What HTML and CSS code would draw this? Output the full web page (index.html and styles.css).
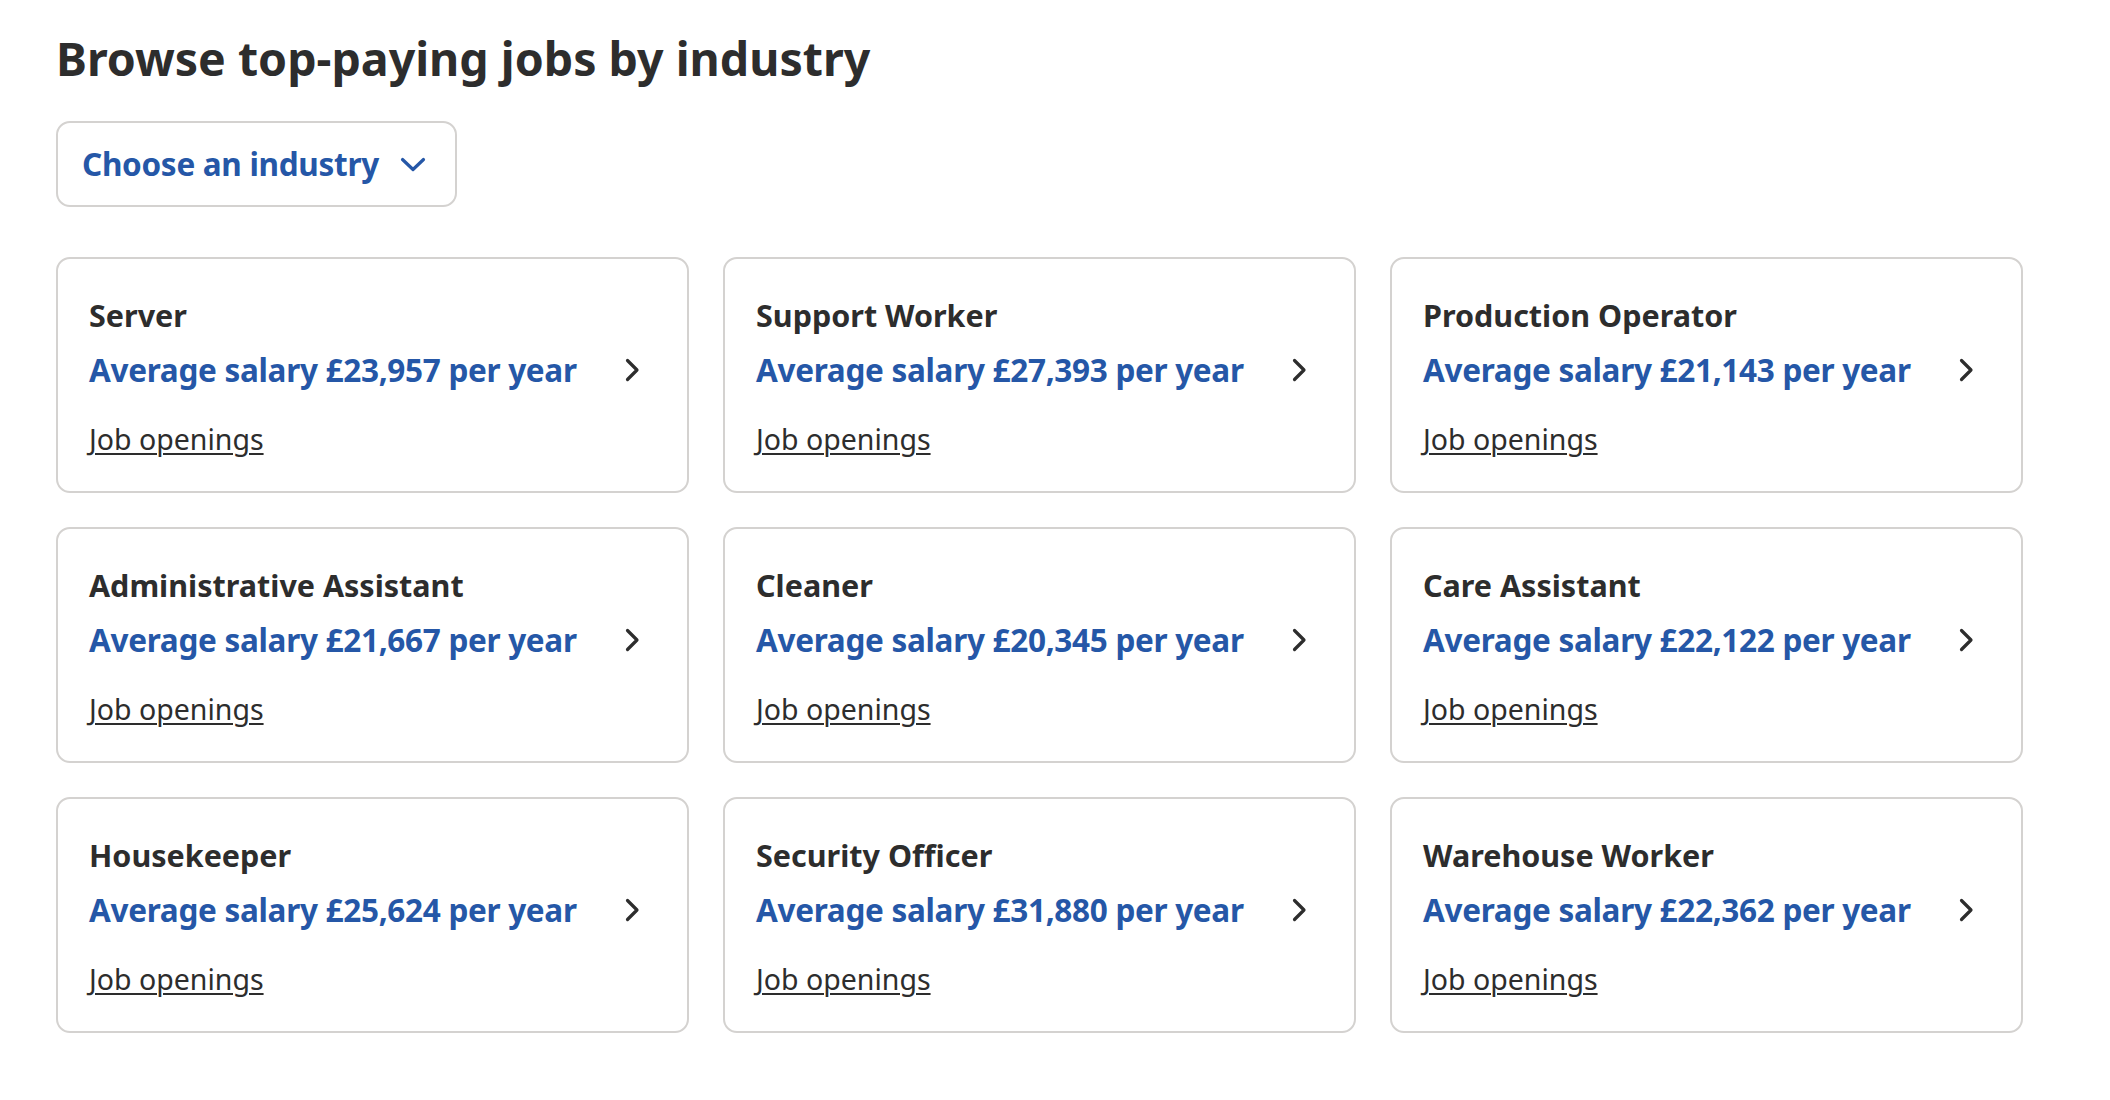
FILE: index.html
```html
<!DOCTYPE html>
<html lang="en">
<head>
<meta charset="utf-8">
<title>Browse top-paying jobs by industry</title>
<link rel="stylesheet" href="styles.css">
</head>
<body>
<main class="page">
  <h1 class="heading">Browse top-paying jobs by industry</h1>
  <button class="select" type="button">
    <span class="select-label">Choose an industry</span>
    <svg class="select-icon" width="26" height="15" viewBox="0 0 26 15" aria-hidden="true"><path d="M2.5 2.5 L13 12.5 L23.5 2.5" fill="none" stroke="#2557a7" stroke-width="3.2" stroke-linecap="round" stroke-linejoin="round"/></svg>
  </button>
  <section class="grid">
    <article class="card">
      <h2 class="card-title">Server</h2>
      <div class="salary-row"><a class="salary" href="#">Average salary £23,957 per year</a><svg class="chev" width="15" height="24" viewBox="0 0 15 24" aria-hidden="true"><path d="M2.5 2.5 L12 12 L2.5 21.5" fill="none" stroke="#2d2d2d" stroke-width="3.2" stroke-linecap="round" stroke-linejoin="round"/></svg></div>
      <a class="openings" href="#">Job openings</a>
    </article>
    <article class="card">
      <h2 class="card-title">Support Worker</h2>
      <div class="salary-row"><a class="salary" href="#">Average salary £27,393 per year</a><svg class="chev" width="15" height="24" viewBox="0 0 15 24" aria-hidden="true"><path d="M2.5 2.5 L12 12 L2.5 21.5" fill="none" stroke="#2d2d2d" stroke-width="3.2" stroke-linecap="round" stroke-linejoin="round"/></svg></div>
      <a class="openings" href="#">Job openings</a>
    </article>
    <article class="card">
      <h2 class="card-title">Production Operator</h2>
      <div class="salary-row"><a class="salary" href="#">Average salary £21,143 per year</a><svg class="chev" width="15" height="24" viewBox="0 0 15 24" aria-hidden="true"><path d="M2.5 2.5 L12 12 L2.5 21.5" fill="none" stroke="#2d2d2d" stroke-width="3.2" stroke-linecap="round" stroke-linejoin="round"/></svg></div>
      <a class="openings" href="#">Job openings</a>
    </article>
    <article class="card">
      <h2 class="card-title">Administrative Assistant</h2>
      <div class="salary-row"><a class="salary" href="#">Average salary £21,667 per year</a><svg class="chev" width="15" height="24" viewBox="0 0 15 24" aria-hidden="true"><path d="M2.5 2.5 L12 12 L2.5 21.5" fill="none" stroke="#2d2d2d" stroke-width="3.2" stroke-linecap="round" stroke-linejoin="round"/></svg></div>
      <a class="openings" href="#">Job openings</a>
    </article>
    <article class="card">
      <h2 class="card-title">Cleaner</h2>
      <div class="salary-row"><a class="salary" href="#">Average salary £20,345 per year</a><svg class="chev" width="15" height="24" viewBox="0 0 15 24" aria-hidden="true"><path d="M2.5 2.5 L12 12 L2.5 21.5" fill="none" stroke="#2d2d2d" stroke-width="3.2" stroke-linecap="round" stroke-linejoin="round"/></svg></div>
      <a class="openings" href="#">Job openings</a>
    </article>
    <article class="card">
      <h2 class="card-title">Care Assistant</h2>
      <div class="salary-row"><a class="salary" href="#">Average salary £22,122 per year</a><svg class="chev" width="15" height="24" viewBox="0 0 15 24" aria-hidden="true"><path d="M2.5 2.5 L12 12 L2.5 21.5" fill="none" stroke="#2d2d2d" stroke-width="3.2" stroke-linecap="round" stroke-linejoin="round"/></svg></div>
      <a class="openings" href="#">Job openings</a>
    </article>
    <article class="card">
      <h2 class="card-title">Housekeeper</h2>
      <div class="salary-row"><a class="salary" href="#">Average salary £25,624 per year</a><svg class="chev" width="15" height="24" viewBox="0 0 15 24" aria-hidden="true"><path d="M2.5 2.5 L12 12 L2.5 21.5" fill="none" stroke="#2d2d2d" stroke-width="3.2" stroke-linecap="round" stroke-linejoin="round"/></svg></div>
      <a class="openings" href="#">Job openings</a>
    </article>
    <article class="card">
      <h2 class="card-title">Security Officer</h2>
      <div class="salary-row"><a class="salary" href="#">Average salary £31,880 per year</a><svg class="chev" width="15" height="24" viewBox="0 0 15 24" aria-hidden="true"><path d="M2.5 2.5 L12 12 L2.5 21.5" fill="none" stroke="#2d2d2d" stroke-width="3.2" stroke-linecap="round" stroke-linejoin="round"/></svg></div>
      <a class="openings" href="#">Job openings</a>
    </article>
    <article class="card">
      <h2 class="card-title">Warehouse Worker</h2>
      <div class="salary-row"><a class="salary" href="#">Average salary £22,362 per year</a><svg class="chev" width="15" height="24" viewBox="0 0 15 24" aria-hidden="true"><path d="M2.5 2.5 L12 12 L2.5 21.5" fill="none" stroke="#2d2d2d" stroke-width="3.2" stroke-linecap="round" stroke-linejoin="round"/></svg></div>
      <a class="openings" href="#">Job openings</a>
    </article>
  </section>
</main>
</body>
</html>
```

FILE: styles.css
```css
html, body {
  margin: 0;
  padding: 0;
  background: #ffffff;
}

body {
  font-family: "Noto Sans", "Open Sans", sans-serif;
  color: #2d2d2d;
}

.page {
  padding: 28px 0 0 56px;
  width: 1967px;
}

.heading {
  margin: 0;
  font-size: 46.5px;
  line-height: 60px;
  font-weight: 700;
  color: #2d2d2d;
  letter-spacing: 0;
}

.select {
  margin-top: 33px;
  display: flex;
  align-items: center;
  gap: 21px;
  height: 86px;
  width: 401px;
  box-sizing: border-box;
  padding: 0 0 0 24px;
  border: 2px solid #d4d2d0;
  border-radius: 14px;
  background: #ffffff;
  font-family: inherit;
  cursor: pointer;
}

.select-label {
  font-size: 31.5px;
  font-weight: 700;
  color: #2557a7;
  line-height: 44px;
  letter-spacing: -0.3px;
}

.select-icon {
  display: block;
  flex: none;
}

.grid {
  margin-top: 50px;
  display: grid;
  grid-template-columns: repeat(3, 633px);
  gap: 34px;
}

.card {
  box-sizing: border-box;
  height: 236px;
  border: 2px solid #d4d2d0;
  border-radius: 14px;
  padding: 36px 47px 0 31px;
  display: flex;
  flex-direction: column;
  align-items: stretch;
}

.card-title {
  margin: 0;
  font-size: 30.5px;
  line-height: 40px;
  font-weight: 700;
  color: #2d2d2d;
}

.salary-row {
  margin-top: 13px;
  display: flex;
  align-items: center;
  justify-content: space-between;
  height: 44px;
}

.salary {
  font-size: 31.5px;
  line-height: 44px;
  font-weight: 700;
  color: #2557a7;
  text-decoration: none;
  letter-spacing: -0.3px;
}

.chev {
  display: block;
  flex: none;
}

.openings {
  margin-top: 27px;
  align-self: flex-start;
  font-size: 28.5px;
  line-height: 40px;
  color: #2d2d2d;
  text-decoration: underline;
  text-decoration-thickness: 2px;
  text-underline-offset: 3px;
}
```
